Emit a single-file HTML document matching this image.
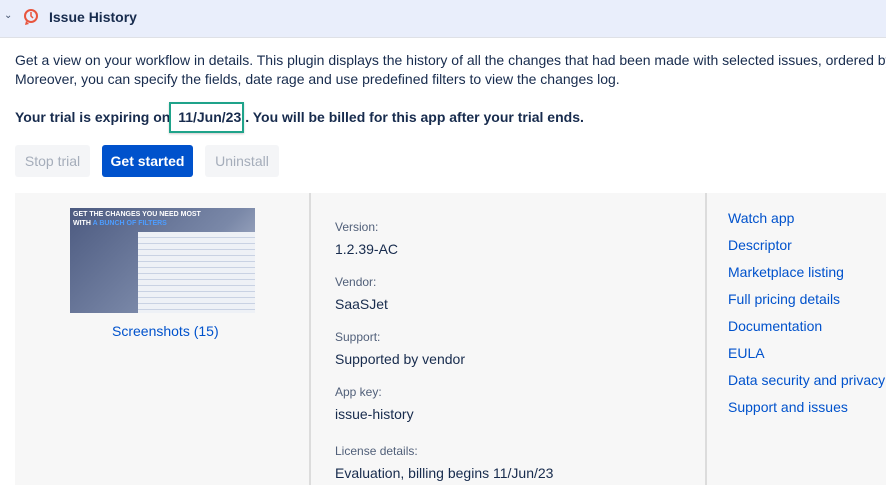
<!DOCTYPE html><html><head><style>
body{margin:0;width:886px;height:485px;overflow:hidden;background:#fff;font-family:"Liberation Sans",sans-serif;color:#172b4d;position:relative}
.a{position:absolute;white-space:nowrap}
.hdr{position:absolute;left:0;top:0;width:886px;height:37px;background:#e9eefb;border-bottom:1px solid #dfe1e6}
.t{font-size:14px}
.btn{position:absolute;top:145px;height:32px;line-height:32px;font-size:14px;border-radius:3px;text-align:center}
.lbl{font-size:12px;color:#505f79}
.v{font-size:14px;color:#172b4d}
.lk{font-size:14px;color:#0052cc}
</style></head><body>
<div class="hdr"></div>
<div class="a" style="left:4px;top:10px;font-size:10px;color:#42526e">&#8964;</div>
<svg class="a" style="left:23px;top:8px" width="16" height="18" viewBox="0 0 16 18"><circle cx="8" cy="8" r="6" fill="none" stroke="#e8553e" stroke-width="2"/><path d="M8 4v4l2 2" stroke="#e8553e" stroke-width="1.5" fill="none"/><path d="M3 13l-1 4 4-1" fill="#e8553e"/></svg>
<div class="a" style="left:49px;top:9px;font-size:14px;font-weight:bold">Issue History</div>
<div class="a t" style="left:15px;top:51px;line-height:19px">Get a view on your workflow in details. This plugin displays the history of all the changes that had been made with selected issues, ordered by<br>Moreover, you can specify the fields, date rage and use predefined filters to view the changes log.</div>
<div class="a t" style="left:15px;top:109px;font-weight:bold">Your trial is expiring on <span style="display:inline-block;width:71px;text-align:center">11/Jun/23</span>. You will be billed for this app after your trial ends.</div>
<div class="a" style="left:169px;top:102px;width:71px;height:27px;border:2px solid #1fa38a;box-shadow:0 1px 2px rgba(0,0,0,.2)"></div>
<div class="btn" style="left:15px;width:75px;background:#f4f5f7;color:#a5adba">Stop trial</div>
<div class="btn" style="left:102px;width:91px;background:#0052cc;color:#fff;font-weight:bold">Get started</div>
<div class="btn" style="left:205px;width:74px;background:#f4f5f7;color:#a5adba">Uninstall</div>
<div class="a" style="left:15px;top:193px;width:871px;height:292px;background:#f7f7f7"></div>
<div class="a" style="left:309px;top:193px;width:2px;height:292px;background:#dcdcdc"></div>
<div class="a" style="left:705px;top:193px;width:2px;height:292px;background:#dcdcdc"></div>
<div class="a" style="left:70px;top:208px;width:185px;height:105px;background:linear-gradient(135deg,#4c5a80,#7a88a8 60%,#c7cede)"></div>
<div class="a" style="left:138px;top:232px;width:117px;height:81px;background:#eef1f6"></div>
<div class="a" style="left:138px;top:232px;width:117px;height:81px;background:repeating-linear-gradient(180deg,transparent 0 5px,#c9d2e3 5px 6px)"></div>
<div class="a" style="left:73px;top:210px;font-size:7px;color:#fff;font-weight:bold;line-height:9px">GET THE CHANGES YOU NEED MOST<br>WITH <span style="color:#4d9dff">A BUNCH OF FILTERS</span></div>
<div class="a lk" style="left:112px;top:323px">Screenshots (15)</div>
<div class="a lbl" style="left:335px;top:220px">Version:</div>
<div class="a v" style="left:335px;top:241px">1.2.39-AC</div>
<div class="a lbl" style="left:335px;top:275px">Vendor:</div>
<div class="a v" style="left:335px;top:296px">SaaSJet</div>
<div class="a lbl" style="left:335px;top:330px">Support:</div>
<div class="a v" style="left:335px;top:351px">Supported by vendor</div>
<div class="a lbl" style="left:335px;top:385px">App key:</div>
<div class="a v" style="left:335px;top:406px">issue-history</div>
<div class="a lbl" style="left:335px;top:444px">License details:</div>
<div class="a v" style="left:335px;top:465px">Evaluation, billing begins 11/Jun/23</div>
<div class="a lk" style="left:728px;top:210px">Watch app</div>
<div class="a lk" style="left:728px;top:237px">Descriptor</div>
<div class="a lk" style="left:728px;top:264px">Marketplace listing</div>
<div class="a lk" style="left:728px;top:291px">Full pricing details</div>
<div class="a lk" style="left:728px;top:318px">Documentation</div>
<div class="a lk" style="left:728px;top:345px">EULA</div>
<div class="a lk" style="left:728px;top:372px">Data security and privacy</div>
<div class="a lk" style="left:728px;top:399px">Support and issues</div>
</body></html>
